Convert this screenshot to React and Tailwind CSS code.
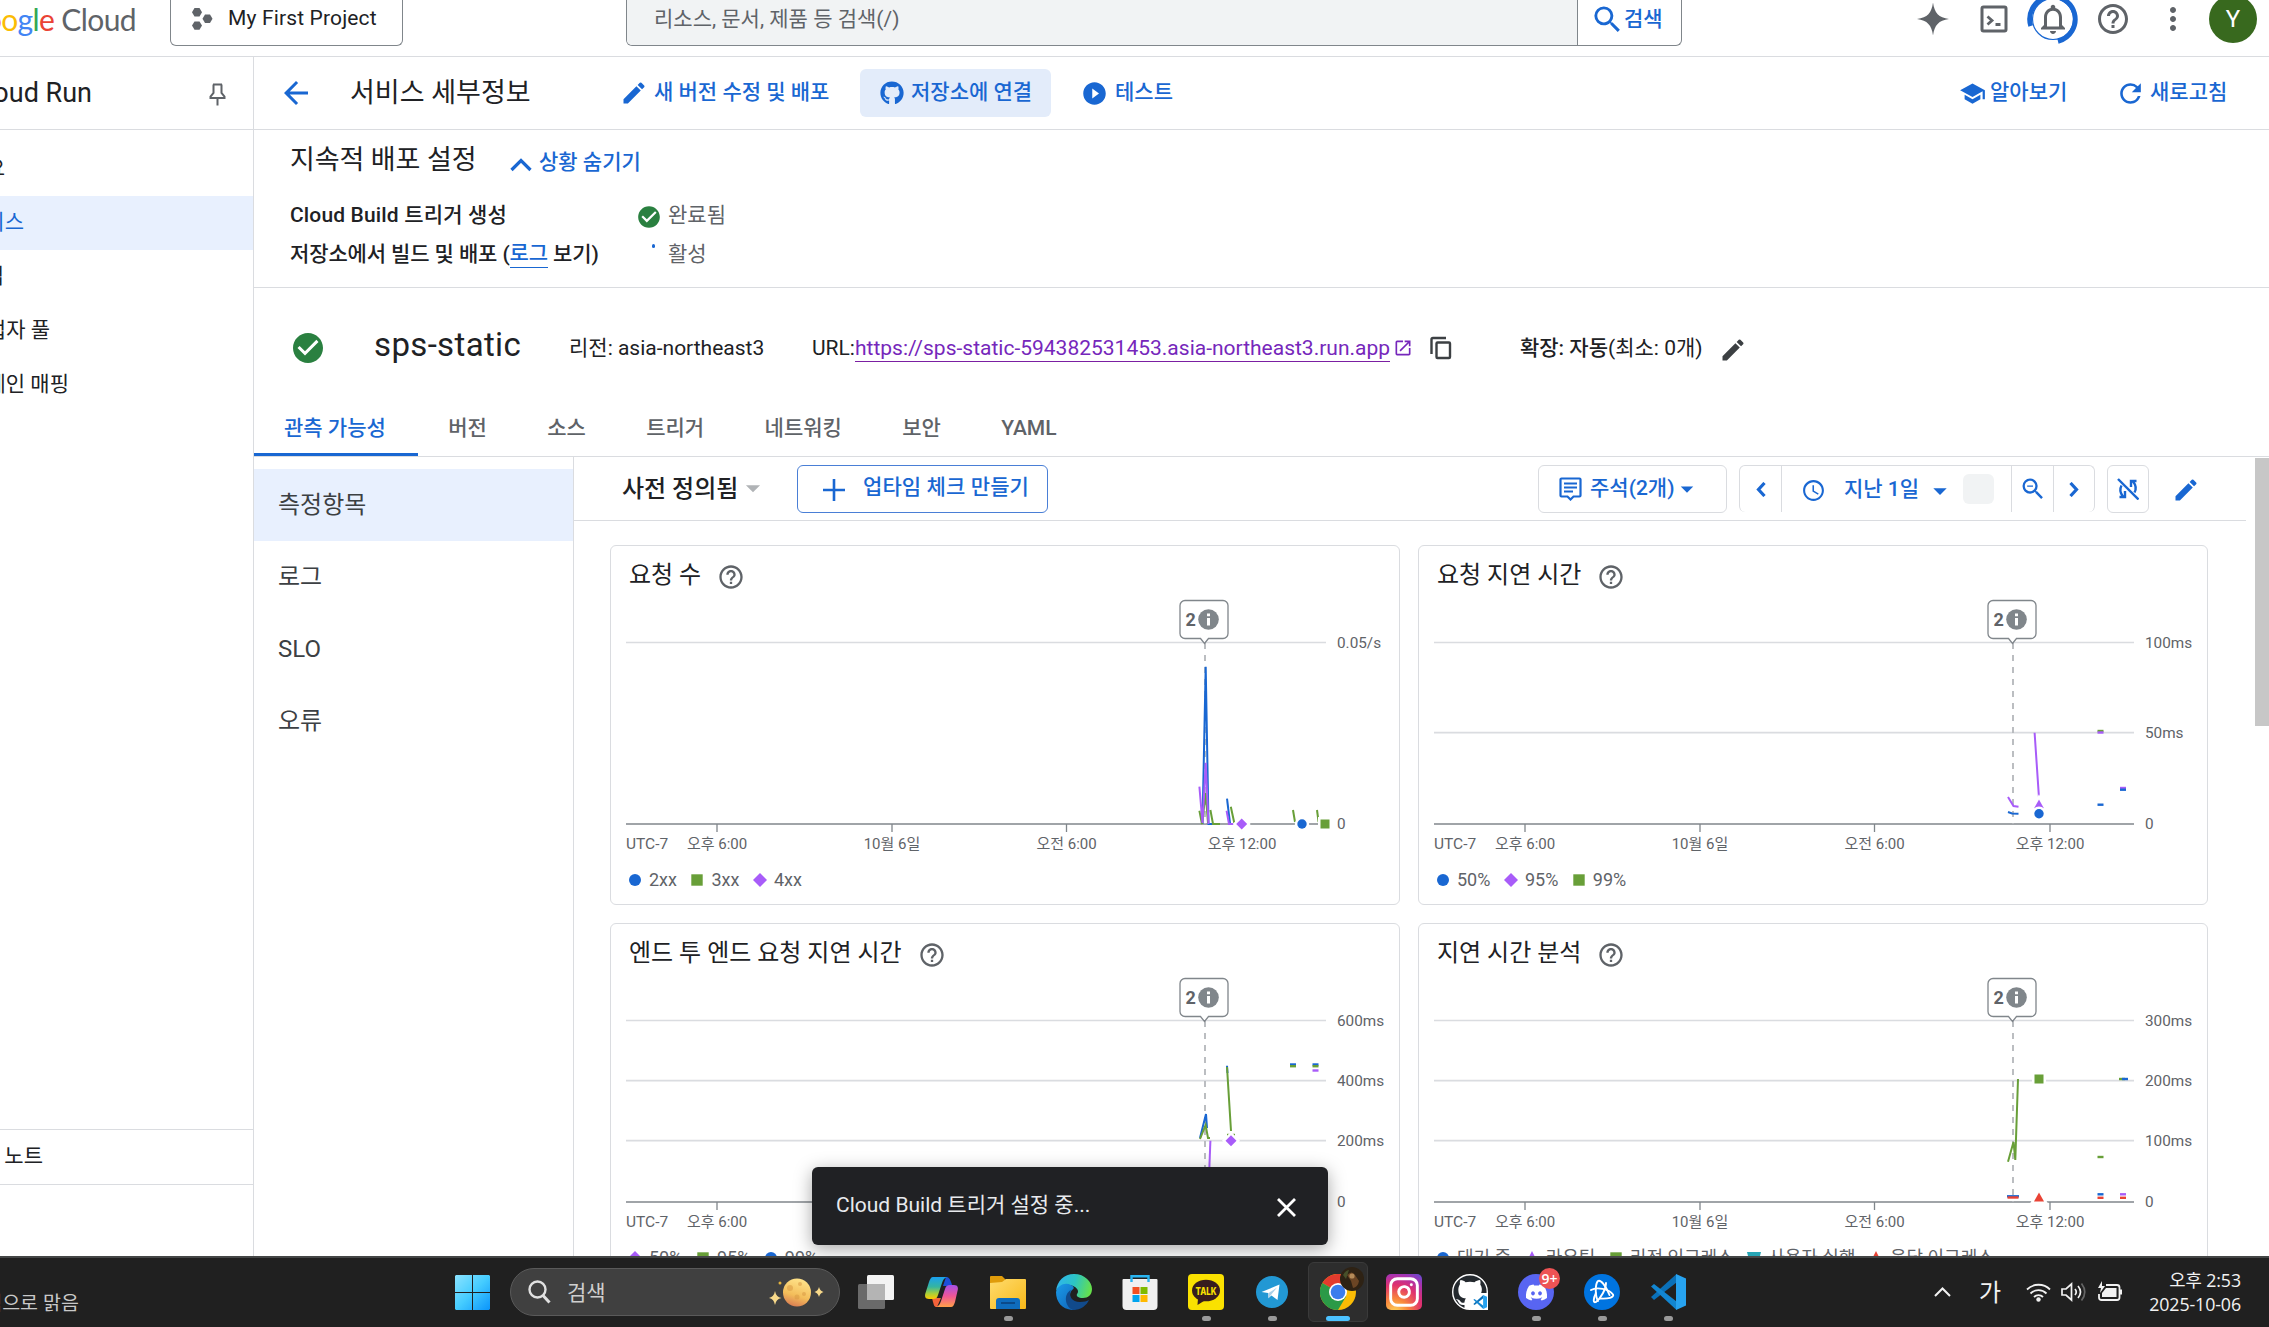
import React from "react";
import {
  MdArrowBack, MdEdit, MdPlayCircleFilled, MdSchool, MdRefresh, MdCheckCircle,
  MdSearch, MdHelpOutline, MdMoreVert, MdOutlineNotifications, MdOpenInNew,
  MdArrowDropDown, MdAccessTime, MdZoomOut, MdClose,
} from "react-icons/md";
import { FaGithub, FaDiscord } from "react-icons/fa";
import { Instagram } from "lucide-react";

const BLUE = "#1967d2";
const C = { blue: "#1967d2", green: "#689f38", purple: "#a85cf9", red: "#e94335", teal: "#26a5b5" };

/* ---------- top bar ---------- */
function TopBar() {
  return (
    <header className="flex h-[57px] shrink-0 items-start border-b border-[#dadce0] bg-white">
      <div className="flex h-[37px] w-[136px] shrink-0 items-center justify-end overflow-hidden whitespace-nowrap font-['Lato'] text-[30px] leading-none tracking-[-0.6px]">
        <span className="text-[#4285f4]">G</span>
        <span className="text-[#ea4335]">o</span>
        <span className="text-[#fbbc04]">o</span>
        <span className="text-[#4285f4]">g</span>
        <span className="text-[#34a853]">l</span>
        <span className="text-[#ea4335]">e</span>
        <span className="ml-[7px] text-[#5f6368]">Cloud</span>
      </div>
      <div className="ml-[34px] flex h-[46px] w-[233px] shrink-0 items-center rounded-b-md border border-t-0 border-[#80868b] pb-2 pl-[21px]">
        <svg className="h-[22px] w-[21px]" viewBox="0 0 21 22" fill="#5f6368">
          <path d="M2.500 0h5l2.500 4.200-2.500 4.200h-5L0 4.200z" />
          <path d="M2.500 13.400h5l2.500 4.200-2.500 4.200h-5L0 17.600z" />
          <path d="M13 6.500h5l2.500 4.200-2.500 4.200h-5l-2.500-4.200z" />
        </svg>
        <span className="ml-[15px] whitespace-nowrap text-[21px] leading-none tracking-[0.15px] text-[#202124]">My First Project</span>
      </div>
      <div className="ml-[223px] flex h-[46px] w-[1056px] shrink-0 overflow-hidden rounded-b-md border border-t-0 border-[#80868b]">
        <div className="flex w-[951px] items-center border-r border-[#80868b] bg-[#f1f3f4] pb-[7px] pl-[27px] text-[21px] leading-none text-[#5f6368]">
          리소스, 문서, 제품 등 검색(/)
        </div>
        <div className="flex items-center pb-[7px] pl-[12px] text-[21px] font-medium leading-none text-[#1967d2]">
          <MdSearch size={35} />
          <span className="-ml-px whitespace-nowrap">검색</span>
        </div>
      </div>
      <div className="ml-[233px] flex h-[38px] items-center text-[#5f6368]">
        <svg className="h-9 w-9" viewBox="0 0 36 36" fill="currentColor">
          <path d="M18 1.500c1.500 10.500 5.500 15 16 16.500-10.500 1.500-14.500 6-16 16.500-1.500-10.500-5.500-15-16-16.500 10.500-1.500 14.500-6 16-16.500z" />
        </svg>
        <svg className="ml-[29px] h-7 w-7" viewBox="0 0 28 28" fill="none" stroke="currentColor" strokeWidth="3">
          <rect x="2" y="2" width="24" height="24" rx="1.500" />
          <path d="M7.500 11.500l4.500 4-4.500 4M15.500 19.500h5" strokeWidth="2.800" />
        </svg>
        <div className="relative ml-[19px] flex h-[52px] w-[52px] items-center justify-center">
          <svg className="absolute inset-0" viewBox="0 0 52 52" fill="none" stroke={BLUE}>
            <circle cx="26" cy="26" r="20.500" strokeWidth="1.200" />
            <path d="M3.700 33A22.800 22.800 0 1 1 31 48.300" strokeWidth="4.800" />
          </svg>
          <MdOutlineNotifications size={36} />
        </div>
        <MdHelpOutline className="ml-[16px]" size={36} />
        <MdMoreVert className="ml-[24px]" size={36} />
        <div className="ml-[18px] flex h-12 w-12 items-center justify-center rounded-full bg-[#38691e] text-[24px] leading-none text-white">Y</div>
      </div>
    </header>
  );
}

/* ---------- left navigation ---------- */
function Sidebar() {
  const items = [
    ["개요", "w-[5px]"],
    ["서비스", "w-[24px]"],
    ["작업", "w-[4px]"],
    ["작업자 풀", "w-[50px]"],
    ["도메인 매핑", "w-[69px]"],
  ];
  return (
    <aside className="flex h-[1199px] w-[254px] shrink-0 flex-col border-r border-[#dadce0] bg-white">
      <div className="flex h-[73px] items-center border-b border-[#dadce0]">
        <div className="flex w-[92px] justify-end overflow-hidden whitespace-nowrap text-[27px] leading-[36px] text-[#202124]">Cloud Run</div>
        <svg className="ml-[117px] mt-[2px] h-[23px] w-[17px]" viewBox="0 0 17 23" fill="none" stroke="#5f6368" strokeWidth="2">
          <path d="M4 1.500h9M4.500 1.500v8.500L1.500 13.500V15h14v-1.500L12.500 10V1.500M8.500 15v7.500" />
        </svg>
      </div>
      <nav className="mt-[12px] text-[21px] text-[#202124]">
        {items.map(([t, w], i) => (
          <div key={t} className={i === 1 ? "flex h-[54px] items-center bg-[#e8f0fe] pb-[2px] text-[#1967d2]" : "flex h-[54px] items-center pb-[2px]"}>
            <div className={w + " flex justify-end overflow-hidden whitespace-nowrap leading-[30px]"}>{t}</div>
          </div>
        ))}
      </nav>
      <div className="mb-[71px] mt-auto flex h-[56px] items-center border-y border-[#dadce0] pb-[3px] text-[21px] text-[#202124]">
        <div className="flex w-[43px] justify-end overflow-hidden whitespace-nowrap leading-[30px]">출시 노트</div>
      </div>
    </aside>
  );
}

/* ---------- page header ---------- */
function TitleBar() {
  return (
    <div className="flex h-[73px] shrink-0 items-center whitespace-nowrap border-b border-[#dadce0] text-[21px] font-medium leading-none text-[#1967d2]">
      <MdArrowBack className="ml-[24px]" size={36} />
      <h1 className="ml-[36px] w-[270px] text-[27px] font-normal leading-[36px] text-[#202124]">서비스 세부정보</h1>
      <MdEdit size={28} />
      <span className="-mt-px ml-[6px] w-[206px]">새 버전 수정 및 배포</span>
      <div className="flex h-12 w-[191px] items-center rounded-md bg-[#e3ecfa] pl-[20px]">
        <FaGithub size={24} />
        <span className="-mt-px ml-[7px]">저장소에 연결</span>
      </div>
      <MdPlayCircleFilled className="ml-[30px]" size={27} />
      <span className="-mt-px ml-[7px] w-[844px]">테스트</span>
      <MdSchool size={27} />
      <span className="-mt-px ml-[4px] w-[125px]">알아보기</span>
      <MdRefresh size={31} />
      <span className="-mt-px ml-[4px]">새로고침</span>
    </div>
  );
}

function DeploySection() {
  return (
    <section className="h-[158px] shrink-0 whitespace-nowrap border-b border-[#dadce0] pl-[36px] pt-[11px] text-[21px] leading-[38px] text-[#202124]">
      <div className="flex h-[38px] items-center">
        <h2 className="w-[220px] text-[27px] tracking-[-0.1px]">지속적 배포 설정</h2>
        <svg className="mt-[9px] h-[14px] w-[22px]" viewBox="0 0 22 14" fill="none" stroke={BLUE} strokeWidth="3.200"><path d="M1.500 12L11 2.500 20.500 12" /></svg>
        <span className="ml-[7px] mt-[4px] font-medium text-[#1967d2]">상황 숨기기</span>
      </div>
      <div className="mt-[17px] flex h-[38px] items-center">
        <span className="w-[346px] font-medium tracking-[0.15px]">Cloud Build 트리거 생성</span>
        <MdCheckCircle className="mt-[3px] text-[#2a8040]" size={26} />
        <span className="ml-[6px] text-[#5f6368]">완료됨</span>
      </div>
      <div className="mt-px flex h-[38px] items-center">
        <span className="flex w-[362px] items-center font-medium tracking-[-0.12px]">
          저장소에서 빌드 및 배포 (<span className="border-b border-[#1967d2] leading-[27px] text-[#1967d2]">로그</span>&nbsp;보기)
        </span>
        <span className="mb-[16px] h-[4px] w-[3px] rounded-full bg-[#1967d2]" />
        <span className="ml-[13px] text-[#5f6368]">활성</span>
      </div>
    </section>
  );
}

function ServiceRow() {
  return (
    <div className="flex h-[116px] shrink-0 items-center whitespace-nowrap pl-[36px] pt-[4px] text-[21px] leading-none text-[#202124]">
      <MdCheckCircle className="text-[#2a8040]" size={36} />
      <h2 className="-mt-[8px] ml-[48px] w-[195px] text-[33px] leading-none tracking-[0.35px]">sps-static</h2>
      <span className="w-[243px]">리전: asia-northeast3</span>
      <span>URL:</span>
      <a className="mt-px w-[535px] border-b border-[#7b1fa2] pb-px leading-[24px] text-[#7627bb]">https://sps-static-594382531453.asia-northeast3.run.app</a>
      <MdOpenInNew className="ml-[3px] text-[#7627bb]" size={20} />
      <svg className="ml-[17px] h-[24px] w-[22px]" viewBox="0 0 22 24" fill="none" stroke="#3c4043" strokeWidth="2.400">
        <path d="M16 2H3a1.500 1.500 0 0 0-1.500 1.500V18" /><rect x="6.500" y="6.500" width="13.500" height="15.500" rx="1" />
      </svg>
      <span className="ml-[68px] w-[199px]"><span className="font-medium">확장: 자동</span>(최소: 0개)</span>
      <MdEdit className="mt-[3px] text-[#3c4043]" size={28} />
    </div>
  );
}

function Tabs() {
  const tabs = ["관측 가능성", "버전", "소스", "트리거", "네트워킹", "보안", "YAML"];
  return (
    <div className="flex h-[53px] shrink-0 whitespace-nowrap border-b border-[#dadce0] text-[21px] font-medium leading-[48px] text-[#5f6368]">
      {tabs.map((t, i) => (
        <div key={t} className={i === 0 ? "w-[164px] border-b-[3px] border-[#1967d2] px-[30px] text-[#1967d2]" : "px-[30.2px]"}>{t}</div>
      ))}
    </div>
  );
}

function SubNav() {
  return (
    <nav className="w-[320px] shrink-0 border-r border-[#dadce0] pt-[12px] text-[24px] text-[#3c4043]">
      {["측정항목", "로그", "SLO", "오류"].map((t, i) => (
        <div key={t} className={i === 0 ? "flex h-[72px] items-center bg-[#e8f0fe] pb-px pl-[24px]" : "flex h-[72px] items-center pb-px pl-[24px]"}>{t}</div>
      ))}
    </nav>
  );
}

function Toolbar() {
  return (
    <div className="flex h-[64px] w-[1672px] shrink-0 items-start whitespace-nowrap border-b border-[#dadce0] pl-[48px] pt-[8px] text-[21px] font-medium leading-none text-[#1967d2]">
      <span className="w-[115px] text-[24px] leading-[48px] text-[#202124]">사전 정의됨</span>
      <MdArrowDropDown className="ml-[-1px] mt-[6px] text-[#b0b3b6]" size={34} />
      <div className="ml-[27px] flex h-[48px] w-[251px] items-center rounded-md border border-[#4a7fd6] pb-[4px] pl-[25px]">
        <svg className="mt-[5px] h-[22px] w-[22px]" viewBox="0 0 22 22" stroke={BLUE} strokeWidth="2.600"><path d="M0 11h22M11 0v22" /></svg>
        <span className="ml-[18px] tracking-[0.1px]">업타임 체크 만들기</span>
      </div>
      <div className="ml-[490px] flex h-[48px] w-[189px] items-center rounded-md border border-[#dadce0] pl-[20px]">
        <svg className="h-6 w-[23px]" viewBox="0 0 23 24" fill="none" stroke={BLUE} strokeWidth="2.200">
          <path d="M2.500 1.500h18a1 1 0 0 1 1 1v16a1 1 0 0 1-1 1h-6l-3 3-3-3h-6a1 1 0 0 1-1-1v-16a1 1 0 0 1 1-1z" />
          <path d="M5 6.500h13M5 10.500h13M5 14.500h9" />
        </svg>
        <span className="-mt-px ml-[8px] w-[83px]">주석(2개)</span>
        <MdArrowDropDown className="-ml-px -mt-px" size={30} />
      </div>
      <div className="ml-[12px] flex h-[47px] w-[356px] items-stretch rounded-md border border-b-0 border-[#dadce0]">
        <div className="flex w-[42px] items-center justify-center border-r border-[#dadce0]">
          <svg className="h-[15px] w-[10px]" viewBox="0 0 10 15" fill="none" stroke={BLUE} strokeWidth="3.200"><path d="M8.500 1L2.500 7.500l6 6.500" /></svg>
        </div>
        <div className="flex w-[230px] items-center border-r border-[#dadce0] pl-[19px]">
          <MdAccessTime className="mt-[3px]" size={25} />
          <span className="ml-[18px] w-[80px]">지난 1일</span>
          <MdArrowDropDown className="mt-[4px]" size={32} />
          <span className="ml-[7px] h-[30px] w-[31px] rounded-md bg-[#f1f3f4]" />
        </div>
        <div className="flex w-[42px] items-center justify-center border-r border-[#dadce0]"><MdZoomOut size={28} /></div>
        <div className="flex flex-1 items-center justify-center">
          <svg className="h-[15px] w-[10px]" viewBox="0 0 10 15" fill="none" stroke={BLUE} strokeWidth="3.200"><path d="M1.500 1l6 6.500-6 6.500" /></svg>
        </div>
      </div>
      <div className="ml-[12px] flex h-[48px] w-[42px] items-center justify-center rounded-md border border-[#dadce0]">
        <svg className="h-[22px] w-[22px]" viewBox="0 0 22 22" fill="none" stroke={BLUE} strokeWidth="2.400">
          <path d="M1 1l20.500 20.500" />
          <path d="M4.500 7.500Q1.500 13 6 18.500M2.500 19h5.500v-6" />
          <path d="M17.500 14.500Q20.500 9 16 3.500M19.500 3H14v6" />
        </svg>
      </div>
      <MdEdit className="ml-[23px] mt-[11px]" size={28} />
    </div>
  );
}

/* ---------- charts ---------- */
function Marker({ kind, color, x, y }) {
  const s = { stroke: "#fff", strokeWidth: 5, paintOrder: "stroke" };
  if (kind === "dot") return <circle cx={x} cy={y} r="4.700" fill={color} {...s} />;
  if (kind === "sq") return <rect x={x - 4.500} y={y - 4.500} width="9" height="9" fill={color} {...s} />;
  if (kind === "tri") return <path d={`M${x} ${y - 4.500}l5 9h-10z`} fill={color} {...s} />;
  return <path d={`M${x} ${y - 5.500}l5.500 5.500-5.500 5.500-5.500-5.500z`} fill={color} {...s} />;
}

function LegendIcon({ kind, color }) {
  return (
    <svg className="mr-[7px] h-[14px] w-[14px]" viewBox="0 0 14 14" fill={color}>
      {kind === "dot" && <circle cx="7" cy="7" r="6" />}
      {kind === "sq" && <rect x="1.300" y="1.300" width="11.400" height="11.400" />}
      {kind === "dia" && <path d="M7 0l7 7-7 7-7-7z" />}
      {kind === "tri" && <path d="M7 0l6 12H1z" />}
      {kind === "trap" && <path d="M0 1h14l-3 12H3z" />}
    </svg>
  );
}

function Chart({ title, grid, lines, dashes = [], markers, legend }) {
  const ticks = [[107, "오후 6:00"], [282, "10월 6일"], [456.500, "오전 6:00"], [632, "오후 12:00"]];
  return (
    <article className="h-[360px] w-[790px] rounded-md border border-[#dadce0] bg-white">
      <div className="flex h-0 items-start">
        <h3 className="ml-[18px] mt-[12px] whitespace-nowrap text-[24px] leading-[34px] text-[#202124]">{title}</h3>
        <MdHelpOutline className="ml-[16px] mt-[17px] shrink-0 text-[#5f6368]" size={28} />
      </div>
      <svg className="block h-[316px] w-[788px] text-[16px]" viewBox="1 1 788 316" fill="#5f6368">
        {grid.map(([y, label]) => (
          <g key={label}>
            <path d={`M16 ${y}H716`} stroke="#dadce0" strokeWidth="1.700" />
            <text x="727" y={y + 5.500} className="text-[15.3px]">{label}</text>
          </g>
        ))}
        <path d="M16 279H716" stroke="#80868b" strokeWidth="1.700" />
        <text x="727" y="284" className="text-[15.3px]">0</text>
        <text x="16" y="303.700" className="text-[15.5px]">UTC-7</text>
        {ticks.map(([x, t]) => (
          <g key={t}>
            <path d={`M${x} 279v8`} stroke="#80868b" strokeWidth="1.300" />
            <text x={x} y="303.700" textAnchor="middle" className="text-[15px]">{t}</text>
          </g>
        ))}
        <path d="M595 98V279" stroke="#b4b7bb" strokeWidth="1.800" strokeDasharray="6 6" />
        {lines.map(([c, d], i) => (
          <path key={i} d={d} fill="none" stroke={C[c]} strokeWidth="2" />
        ))}
        {dashes.map(([c, x, y, w], i) => (
          <rect key={i} x={x - w / 2} y={y - 1.200} width={w} height="2.400" fill={C[c]} />
        ))}
        {markers.map(([k, c, x, y], i) => <Marker key={i} kind={k} color={C[c]} x={x} y={y} />)}
        <path d="M575 55.500h38a5 5 0 0 1 5 5v28a5 5 0 0 1-5 5h-14.500l-4 5-4-5H575a5 5 0 0 1-5-5v-28a5 5 0 0 1 5-5z" fill="#fff" stroke="#80868b" strokeWidth="1.300" />
        <text x="575.500" y="80.500" className="text-[18px] font-bold">2</text>
        <circle cx="598.500" cy="74.500" r="10.300" fill="#80868b" />
        <path d="M597 73h3v7.500h-3zM597 68.500h3v2.800h-3z" fill="#fff" />
      </svg>
      <div className="flex h-[36px] items-center whitespace-nowrap pl-[17px] text-[18px] leading-none text-[#5f6368]">
        {legend.map(([k, c, t]) => (
          <span key={t} className="mr-[13.500px] flex items-center"><LegendIcon kind={k} color={C[c]} />{t}</span>
        ))}
      </div>
    </article>
  );
}

function Charts() {
  return (
    <div className="ml-[36px] mt-[24px] grid w-max grid-cols-2 gap-[18px]">
      <Chart
        title="요청 수"
        grid={[[97.500, "0.05/s"]]}
        lines={[
          ["blue", "M592.500 279L595.700 121.700L598.500 279h4"],
          ["green", "M589.400 265.700L592 279L595.700 248L598 278M600.400 265L603 279h7"],
          ["purple", "M589.400 241.700L592.500 278L595.700 217.700L598.500 279"],
          ["blue", "M617 253.700L620 278"],
          ["purple", "M616.600 265.700L619 279h5"],
          ["green", "M620.800 261.700L624.300 278M683 265L685 277M707 265L708.600 277"],
        ]}
        markers={[["dia", "purple", 631.7, 279], ["dot", "blue", 692, 279], ["sq", "green", 715, 279]]}
        legend={[["dot", "blue", "2xx"], ["sq", "green", "3xx"], ["dia", "purple", "4xx"]]}
      />
      <Chart
        title="요청 지연 시간"
        grid={[[97.500, "100ms"], [187.7, "50ms"]]}
        lines={[
          ["purple", "M616.600 187.700L621 253M590 252L595.500 261L600.500 261.700"],
          ["blue", "M590 267L594 268.500L600.500 268.700"],
        ]}
        dashes={[["green", 682.5, 186, 6], ["purple", 682.5, 187.5, 6], ["blue", 682.5, 259.7, 6], ["purple", 705, 243, 6], ["blue", 705, 244.7, 6]]}
        markers={[["tri", "purple", 621, 259], ["dot", "blue", 621, 268.7]]}
        legend={[["dot", "blue", "50%"], ["dia", "purple", "95%"], ["sq", "green", "99%"]]}
      />
      <Chart
        title="엔드 투 엔드 요청 지연 시간"
        grid={[[97.500, "600ms"], [157.7, "400ms"], [217.7, "200ms"]]}
        lines={[
          ["blue", "M590 215L596 191L597 205M617 142.700L617.500 150"],
          ["green", "M590 216L595.600 202L598 215h2M617 144L621 208"],
          ["purple", "M600.400 217.700L598 279"],
        ]}
        dashes={[["blue", 683, 141.5, 6], ["green", 683, 143.2, 6], ["blue", 705.5, 141.5, 6], ["green", 705.5, 143.2, 6], ["purple", 705.5, 147.5, 6], ["green", 621, 212, 8]]}
        markers={[["dia", "purple", 621, 217.7]]}
        legend={[["dia", "purple", "50%"], ["sq", "green", "95%"], ["dot", "blue", "99%"]]}
      />
      <Chart
        title="지연 시간 분석"
        grid={[[97.500, "300ms"], [157.7, "200ms"], [217.7, "100ms"]]}
        lines={[["green", "M590 238.700L595.500 219L597.300 237L600 156"]]}
        dashes={[
          ["green", 704, 156, 6], ["blue", 707, 156, 6], ["green", 682.5, 234, 6], ["blue", 595, 273.3, 12], ["red", 595, 274.5, 11],
          ["blue", 682.5, 271.3, 6], ["red", 682.5, 274.8, 6], ["purple", 705, 271.3, 6], ["red", 705, 274.8, 6],
        ]}
        markers={[["sq", "green", 621, 156], ["tri", "red", 621, 274]]}
        legend={[["dot", "blue", "대기 중"], ["tri", "purple", "라우팅"], ["sq", "green", "리전 인그레스"], ["trap", "teal", "사용자 실행"], ["tri", "red", "응답 이그레스"]]}
      />
    </div>
  );
}

function Toast() {
  return (
    <div className="absolute left-[812px] top-[1167px] flex h-[78px] w-[516px] items-center rounded-md bg-[#202124] pl-[24px] pr-[26px] text-[21px] text-[#e8eaed] shadow-[0_4px_18px_rgba(0,0,0,0.35)]">
      <span>Cloud Build 트리거 설정 중...</span>
      <svg className="ml-auto mr-[6px] mt-[2px] h-[19px] w-[19px]" viewBox="0 0 19 19" stroke="#fff" strokeWidth="2.800"><path d="M1 1l17 17M18 1L1 18" /></svg>
    </div>
  );
}

/* ---------- taskbar ---------- */
function TaskCell({ children, running, active }) {
  return (
    <div className="relative flex h-full w-[66px] items-center justify-center">
      <div className={active ? "flex h-[60px] w-[60px] items-center justify-center rounded-md border border-[#3a3a3a] bg-[#2d2d2d]" : "flex items-center justify-center"}>
        {children}
      </div>
      {running && <span className="absolute bottom-[5px] h-[5px] w-[9px] rounded-full bg-[#9a9a9a]" />}
      {active && <span className="absolute bottom-[5px] h-[5px] w-[24px] rounded-full bg-[#4cc2ff]" />}
    </div>
  );
}

function VsCode({ className }) {
  return (
    <svg className={className} viewBox="0 0 36 36">
      <path d="M1 23l3 3 22.500-17.500V0z" fill="#0a70b8" />
      <path d="M1 12.500L4 10l22.500 17.500V36z" fill="#1286d2" />
      <path d="M26 0l10 4.500v27L26 36z" fill="#27a3f0" />
    </svg>
  );
}

function Taskbar() {
  const s = "h-9 w-9";
  return (
    <footer className="absolute left-0 top-[1256px] flex h-[71px] w-[2269px] items-center overflow-hidden border-t-2 border-[#444646] bg-[#202020] pb-px font-['Open_Sans','Noto_Sans_CJK_KR',sans-serif] text-[#f2f2f2]">
      <div className="mt-[22px] flex w-[79px] justify-end overflow-hidden whitespace-nowrap text-[19.5px] leading-[26px] text-[#c9c9c9]">대체적으로 맑음</div>
      <svg className="ml-[376px] h-[35px] w-[35px]" viewBox="0 0 35 35">
        <defs>
          <linearGradient id="win" gradientUnits="userSpaceOnUse" x1="0" y1="0" x2="35" y2="35"><stop offset="0" stopColor="#8be3ff" /><stop offset=".5" stopColor="#45ccff" /><stop offset="1" stopColor="#0a94fb" /></linearGradient>
        </defs>
        <path d="M1 0h16v17H0V1zM18 0h16l1 1v16H18zM0 18h17v17H1l-1-1zM18 18h17v16l-1 1H18z" fill="url(#win)" />
      </svg>
      <div className="ml-[20px] flex h-[48px] w-[330px] items-center rounded-full border border-[#5a5a5a] bg-[#404040] pl-[17px]">
        <svg className="h-[24px] w-[23px]" viewBox="0 0 23 24" fill="none" stroke="#e0e0e0" strokeWidth="2.400">
          <circle cx="9.500" cy="9.500" r="8" /><path d="M15 15.500l6.500 7" strokeWidth="3" />
        </svg>
        <span className="ml-[16px] text-[21px] leading-none text-[#cfcfcf]">검색</span>
        <svg className="ml-auto mr-[14px] h-[30px] w-[56px]" viewBox="0 0 56 30">
          <defs><linearGradient id="moon" x1=".6" y1="0" x2=".3" y2="1"><stop offset="0" stopColor="#ffe38a" /><stop offset=".6" stopColor="#f3bd5a" /><stop offset="1" stopColor="#d87a52" /></linearGradient></defs>
          <circle cx="28" cy="15.500" r="14" fill="url(#moon)" />
          <g fill="#d99a45" opacity=".55"><circle cx="21" cy="11" r="3" /><circle cx="31" cy="7" r="2" /><circle cx="28" cy="20" r="2.500" /><circle cx="35" cy="17" r="2" /></g>
          <path d="M6 14q1 6 6.500 7-5.500 1-6.500 7-1-6-6.500-7 5.500-1 6.500-7z" fill="#f8d98a" />
          <path d="M50 10q1 4 4.500 5-3.500 1-4.500 5-1-4-4.500-5 3.500-1 4.500-5z" fill="#f8d98a" />
          <circle cx="11" cy="6" r="1.500" fill="#e3b23c" />
        </svg>
      </div>
      <div className="ml-[3px] flex h-full items-center">
        <TaskCell>
          <svg className={s} viewBox="0 0 36 36">
            <rect x="9" y="1" width="27" height="25" rx="1.500" fill="#f3f3f3" />
            <rect x="0" y="10" width="27" height="25" rx="1.500" fill="#6a6a6a" />
            <path d="M9 10h18v16H9z" fill="#b4b4b4" />
          </svg>
        </TaskCell>
        <TaskCell>
          <svg className={s} viewBox="0 0 36 36">
            <defs>
              <linearGradient id="cpa" x1="0" y1="0" x2="0" y2="1"><stop offset="0" stopColor="#1aa0f0" /><stop offset=".45" stopColor="#35b5a0" /><stop offset=".75" stopColor="#a8cf3a" /><stop offset="1" stopColor="#ffc800" /></linearGradient>
              <linearGradient id="cpb" x1="0" y1="0" x2="0" y2="1"><stop offset="0" stopColor="#a650e8" /><stop offset=".5" stopColor="#f05596" /><stop offset="1" stopColor="#ffa048" /></linearGradient>
            </defs>
            <path d="M22 3c3 0 4 2 5 5l1.500 4H19z" fill="#1c50d8" />
            <path d="M13 33c-3 0-3-2-4-5l-1-4h9z" fill="#f4623a" />
            <path d="M9 3h14c-3 1-4 3-5 6l-4 12c-1 3-2 4-5 4H5c-4 0-4.500-3-3.500-6L5 8c1-3 2-5 4-5z" fill="url(#cpa)" />
            <path d="M27 33H12c3-1 4-3 5-6l4-12c1-3 2-4 5-4h4c4 0 4.500 3 3.500 6L31 28c-1 3-2 5-4 5z" fill="url(#cpb)" />
          </svg>
        </TaskCell>
        <TaskCell running>
          <svg className={s} viewBox="0 0 36 36">
            <defs><linearGradient id="fold" x1="0" y1="0" x2="1" y2="1"><stop offset="0" stopColor="#ffdc6e" /><stop offset="1" stopColor="#f8b818" /></linearGradient></defs>
            <path d="M0 3a1 1 0 0 1 1-1h11l4 4v5H0z" fill="#e09c0a" />
            <path d="M0 9l12-1 4-3h19a1 1 0 0 1 1 1v28a1 1 0 0 1-1 1H1a1 1 0 0 1-1-1z" fill="url(#fold)" />
            <path d="M6 35V27a3 3 0 0 1 3-3h18a3 3 0 0 1 3 3v8z" fill="#0f6cbd" /><path d="M11 29h14" stroke="#0b4a8a" strokeWidth="2" />
          </svg>
        </TaskCell>
        <TaskCell>
          <svg className={s} viewBox="0 0 36 36">
            <defs>
              <linearGradient id="ea" x1="0" y1=".3" x2="1" y2=".5"><stop offset="0" stopColor="#2fb4ee" /><stop offset=".5" stopColor="#2cc4c4" /><stop offset="1" stopColor="#66e04a" /></linearGradient>
              <linearGradient id="eb" x1="0" y1="0" x2="1" y2="1"><stop offset="0" stopColor="#1a9be8" /><stop offset="1" stopColor="#0f5fb5" /></linearGradient>
            </defs>
            <path d="M0 17C1 7 8 0 18 0c11 0 18 8 18 15 0 6-4 9-9 9-5 0-7-2-6-4 2-2 1-5-2-7C13 9 4 10 0 17z" fill="url(#ea)" />
            <path d="M0 18C2 11 9 8 15 11c4 2 3 4 1 5-4 4-2 13 7 16-2 3-5 4-7 4C6 35 0 28 0 18z" fill="url(#eb)" />
            <path d="M15 16c-3 6 1 12 9 12 4 0 7-1 9-2-2 5-8 10-16 10-8-3-10-16-2-20z" fill="#114a8b" />
          </svg>
        </TaskCell>
        <TaskCell>
          <svg className={s} viewBox="0 0 36 36">
            <path d="M.5 6a1 1 0 0 1 1-1h33a1 1 0 0 1 1 1v26a4 4 0 0 1-4 4h-27a4 4 0 0 1-4-4z" fill="#f0f0f0" />
            <path d="M9.500 8V2.200h17V8" fill="none" stroke="#28b4f0" strokeWidth="2.400" />
            <path d="M10.500 13h7v7h-7z" fill="#f25022" /><path d="M18.500 13h7v7h-7z" fill="#7fba00" />
            <path d="M10.500 21h7v7h-7z" fill="#00a4ef" /><path d="M18.500 21h7v7h-7z" fill="#ffb900" />
          </svg>
        </TaskCell>
        <TaskCell running>
          <svg className={s} viewBox="0 0 36 36">
            <rect width="36" height="36" rx="4" fill="#fae100" />
            <ellipse cx="18" cy="16.500" rx="14" ry="10.800" fill="#371d1e" /><path d="M10 24l-.5 7 8-5z" fill="#371d1e" />
            <text x="18" y="20.500" textAnchor="middle" fill="#fae100" className="font-['Inter'] text-[10px] font-extrabold" textLength="21" lengthAdjust="spacingAndGlyphs">TALK</text>
          </svg>
        </TaskCell>
        <TaskCell running>
          <svg className={s} viewBox="0 0 36 36">
            <circle cx="18" cy="18" r="16" fill="#2298d4" />
            <path d="M7.500 18L25.500 10.500 23.500 26l-6-4.500-3 2.500-.500-5z" fill="#fff" /><path d="M14 19.500l9-6-6.500 8-2 3z" fill="#a9d0e8" />
          </svg>
        </TaskCell>
        <TaskCell active>
          <div className="relative">
            <svg className={s} viewBox="0 0 36 36">
              <circle cx="18" cy="18" r="18" fill="#fbbc05" />
              <path d="M18 18L2.400 9A18 18 0 0 1 33.600 9z" fill="#e33b2e" />
              <path d="M18 18L2.400 9A18 18 0 0 0 18 36l8-13.500z" fill="#2b9a47" />
              <circle cx="18" cy="18" r="9" fill="#fff" /><circle cx="18" cy="18" r="7.300" fill="#3b7ded" />
            </svg>
            <svg className="absolute left-[20px] top-[-7px] h-[24px] w-[24px]" viewBox="0 0 24 24">
              <circle cx="12" cy="12" r="12" fill="#2e2214" />
              <path d="M7 8q5-5 8 0l4 6q-1 6-6 7l-2-7z" fill="#6b4524" /><circle cx="12" cy="9" r="2.600" fill="#b48a58" /><path d="M3 8q3-5 6-5L6 12z" fill="#47502a" />
            </svg>
          </div>
        </TaskCell>
        <TaskCell>
          <div className="flex h-9 w-9 items-center justify-center rounded-[5px] bg-[radial-gradient(circle_at_25%_105%,#fdd35a_0%,#f9873c_28%,#e0306e_58%,#a832b0_80%,#5b50d8_100%)]">
            <Instagram size={32} color="#fff" strokeWidth={2.2} />
          </div>
        </TaskCell>
        <TaskCell>
          <div className="relative h-9 w-9">
            <svg className="h-9 w-9" viewBox="0 0 36 36">
              <circle cx="18" cy="18" r="17.300" fill="#24292e" stroke="#fff" strokeWidth="1.400" />
              <path d="M8 10c-.5-2 0-3 .5-4 2 0 4 1 5 2.200q4.500-1 9 0C24 7 26 6 28 6c.5 1 .8 2.500.3 4.500 2 3 2 6 .7 9-1.500 3.500-5 4.500-7 4.700 1 1 1.500 2.500 1.500 4V35h-11v-4c-4 .5-5.500-1.500-6.500-3.500-.5-1-1-1.500-2-2 2-.6 3.500.500 4.500 2 1 1.300 2 1.500 4 1 0-1.500.500-3 1.500-4-4-.5-7-2-7.500-6.500-.5-3 0-5.500 1.500-8z" fill="#fff" />
            </svg>
            <div className="absolute bottom-0 right-0 flex h-[17px] w-[17px] items-center justify-center rounded-tl-lg bg-white"><VsCode className="h-[14px] w-[14px]" /></div>
          </div>
        </TaskCell>
        <TaskCell running>
          <div className="relative flex h-9 w-9 items-center justify-center rounded-full bg-[#5865f2]">
            <FaDiscord size={23} color="#fff" />
            <span className="absolute left-[21px] top-[-6px] flex h-[21px] w-[21px] items-center justify-center rounded-full bg-[#ee5355] text-[14px] font-semibold leading-none text-white">9+</span>
          </div>
        </TaskCell>
        <TaskCell running>
          <svg className={s} viewBox="0 0 36 36">
            <circle cx="18" cy="18" r="18" fill="#0074e0" />
            <g fill="none" stroke="#fff" strokeWidth="1.900" strokeLinecap="round">
              <path d="M14 27C11 22 11 10 14 7c3-1.500 8 5 11.500 14" />
              <path d="M7 16c6-3.500 18-1 22 4.500 1.500 3-5 4.500-13 4" />
              <path d="M22 9c0 6-5 15-10 19-3 1.500-3-3 0-9" />
            </g>
          </svg>
        </TaskCell>
        <TaskCell running><VsCode className={s} /></TaskCell>
      </div>
      <div className="ml-auto mr-[28px] flex h-full items-center">
        <svg className="mr-[28px] h-[10px] w-[17px]" viewBox="0 0 17 10" fill="none" stroke="#f2f2f2" strokeWidth="2"><path d="M1 9l7.500-7.500L16 9" /></svg>
        <span className="mr-[25px] text-[24px] leading-none">가</span>
        <svg className="mr-[10px] h-[20px] w-[25px]" viewBox="0 0 25 20" fill="none" stroke="#f2f2f2" strokeWidth="1.800">
          <path d="M1 7.500a16.300 16.300 0 0 1 23 0M4.500 11.500a11.300 11.300 0 0 1 16 0M8 15a6.400 6.400 0 0 1 9 0" /><circle cx="12.500" cy="17.500" r="2.200" fill="#f2f2f2" stroke="none" />
        </svg>
        <svg className="mr-[11px] h-[20px] w-[25px]" viewBox="0 0 25 20" fill="none" stroke="#f2f2f2" strokeWidth="1.700">
          <path d="M1 7h4l5.500-5v16L5 13H1zM14 7q2.500 3 0 6M17 4q5 6 0 12" /><path d="M20.500 1.500q6.500 8.500 0 17" stroke="#666" />
        </svg>
        <svg className="mr-[22px] h-[20px] w-[26px] overflow-visible" viewBox="0 0 26 20" fill="none" stroke="#f2f2f2" strokeWidth="1.800">
          <path d="M9 3h11q2.500 0 2.500 2.500v10q0 2.500-2.500 2.500H4.500Q2 18 2 15.500V12" /><path d="M9 6h10.500v9H5V11z" fill="#f2f2f2" stroke="none" /><path d="M23.500 7.500v5" strokeWidth="3" /><path d="M5-1L1 6h3l-1 5 5-7H5z" fill="#f2f2f2" stroke="none" />
        </svg>
        <div className="flex w-[96px] flex-col items-end whitespace-nowrap text-[17.800px] leading-[24px] tracking-[-0.1px]">
          <span>오후 2:53</span>
          <span>2025-10-06</span>
        </div>
      </div>
    </footer>
  );
}

export default function App() {
  return (
    <div className="relative flex h-[1327px] w-[2269px] flex-col overflow-hidden bg-white font-['Roboto','Noto_Sans_CJK_KR',sans-serif]">
      <TopBar />
      <div className="flex h-[1270px] shrink-0">
        <Sidebar />
        <main className="flex w-[2015px] flex-col">
          <TitleBar />
          <DeploySection />
          <ServiceRow />
          <Tabs />
          <div className="flex flex-1 overflow-hidden">
            <SubNav />
            <div className="flex flex-1 flex-col">
              <Toolbar />
              <Charts />
            </div>
            <div className="w-[14px] shrink-0 pt-px"><div className="h-[268px] bg-[#c7c7c7]" /></div>
          </div>
        </main>
      </div>
      <Toast />
      <Taskbar />
    </div>
  );
}
